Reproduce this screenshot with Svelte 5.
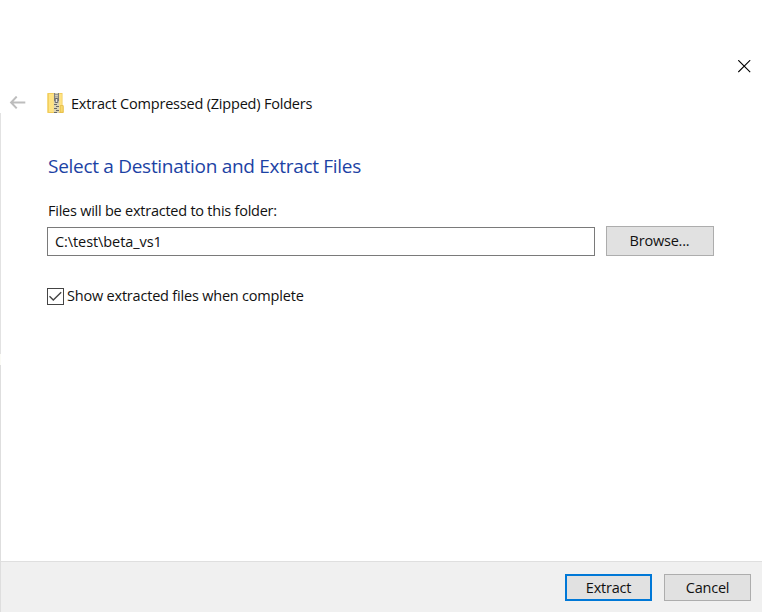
<script>
  let folder = $state('C:\\test\\beta_vs1');
  let showFiles = $state(true);
</script>

<main class="wizard">
  <div class="edge"></div>
  <div class="caption">
    <button class="close" aria-label="Close">
      <svg width="13" height="13" viewBox="0 0 13 13"><path d="M.3 .2 12.2 12.1M12.2 .2 .3 12.1" stroke="#000" stroke-width="1.1" fill="none" /></svg>
    </button>
  </div>
  <header>
    <svg class="back" width="17" height="14" viewBox="0 0 17 14"><path d="M7.7 .6 2.1 6.5 7.7 12.4M2.2 6.5H16.3" stroke="#bdbdbd" stroke-width="2" fill="none" /></svg>
    <svg class="zip" width="17" height="21" viewBox="0 0 17 21">
      <path d="M.5 0H15.5V12.5L16.5 13.5V20H.5Z" fill="#efc957" />
      <path d="M1.5 .8H14.8V19H1.5Z" fill="#ffe382" />
      <path d="M.5 .5H2V19.5H.5Z" fill="#f3d05f" />
      <path d="M13.3 12.5H16.2V19.3H13.3Z" fill="#f8d86c" stroke="#e3b944" stroke-width=".7" />
      <path d="M6.8 0H12.2V20H6.8Z" fill="#d9d2b5" />
      <path d="M7.6 0V8M11.4 0V8" stroke="#777" stroke-width="1" />
      <path d="M8 1.5H11M8 3.8H11" stroke="#999" />
      <path d="M8.2 5.5H10.8V9.5H8.2Z" fill="#e4e4e4" stroke="#666" />
      <path d="M7 11.5H10M9 13.5H12M7 15.5H10M9 17.5H12M7 19.5H10" stroke="#686868" stroke-width="1.2" />
    </svg>
    <span class="title">Extract Compressed (Zipped) Folders</span>
  </header>
  <section>
    <h1>Select a Destination and Extract Files</h1>
    <label class="prompt" for="folder">Files will be extracted to this folder:</label>
    <div class="row">
      <input id="folder" bind:value={folder} />
      <button class="push browse">Browse...</button>
    </div>
    <label class="check">
      <input type="checkbox" bind:checked={showFiles} />
      <span class="box">
        {#if showFiles}
          <svg width="15" height="15" viewBox="0 0 15 15"><path d="M1.5 7.2 5.3 11 13.2 3.2" stroke="#444" stroke-width="1.4" fill="none" /></svg>
        {/if}
      </span>
      <span>Show extracted files when complete</span>
    </label>
  </section>
  <footer>
    <button class="push primary">Extract</button>
    <button class="push cancel">Cancel</button>
  </footer>
</main>

<style>
  :global(body) { background: #fff; overflow: hidden; }
  .wizard {
    position: relative;
    width: 762px;
    height: 612px;
    display: flex;
    flex-direction: column;
    background: #fff;
    font: 14.5px/20px "Open Sans", "Noto Sans", sans-serif;
    color: #111;
  }
  button, input { font: inherit; color: inherit; box-sizing: border-box; margin: 0; }
  .edge {
    position: absolute;
    left: 0;
    top: 113px;
    bottom: 0;
    width: 1px;
    background: linear-gradient(#e2e2e2 0 241px, #fbfbf6 241px 252px, #dedede 252px);
  }
  .caption { height: 92px; box-sizing: border-box; padding: 60px 11px 0 0; display: flex; justify-content: flex-end; align-items: flex-start; }
  .close { border: 0; padding: 0; background: none; display: flex; }
  header { height: 22px; display: flex; align-items: center; padding-left: 9px; }
  .back { margin-right: 21px; }
  .zip { margin-right: 7px; }
  .title { letter-spacing: -0.2px; white-space: nowrap; padding-top: 1px; }
  section { flex: 1; padding: 38px 48px 0 48px; }
  h1 { margin: 0; font-size: 19px; line-height: 28px; font-weight: 400; color: #1c42a4; letter-spacing: -0.29px; white-space: nowrap; }
  .prompt { display: block; margin-top: 21px; letter-spacing: -0.24px; }
  .row { display: flex; margin-top: 5px; margin-left: -1px; gap: 11px; }
  #folder { width: 548px; height: 29px; margin-top: 1px; border: 1px solid #7a7a7a; padding: 0 7px 1px; background: #fff; outline: 0; letter-spacing: -0.08px; }
  .push { border: 1px solid #adadad; background: #e1e1e1; padding: 0; text-align: center; letter-spacing: -0.22px; }
  .browse { width: 108px; height: 30px; padding-right: 1px; }
  .check { display: flex; align-items: center; margin: 30px 0 0 -1px; letter-spacing: -0.2px; }
  .check input { position: absolute; opacity: 0; }
  .box { width: 15px; height: 15px; border: 1px solid #444; margin-right: 3px; display: flex; }
  footer { height: 51px; box-sizing: border-box; border-top: 1px solid #dfdfdf; background: #f0f0f0; display: flex; justify-content: flex-end; padding: 12px 11px 0 0; gap: 12px; }
  .primary { width: 87px; height: 27px; border: 2px solid #0078d7; }
  .cancel { width: 87px; height: 27px; }
</style>
